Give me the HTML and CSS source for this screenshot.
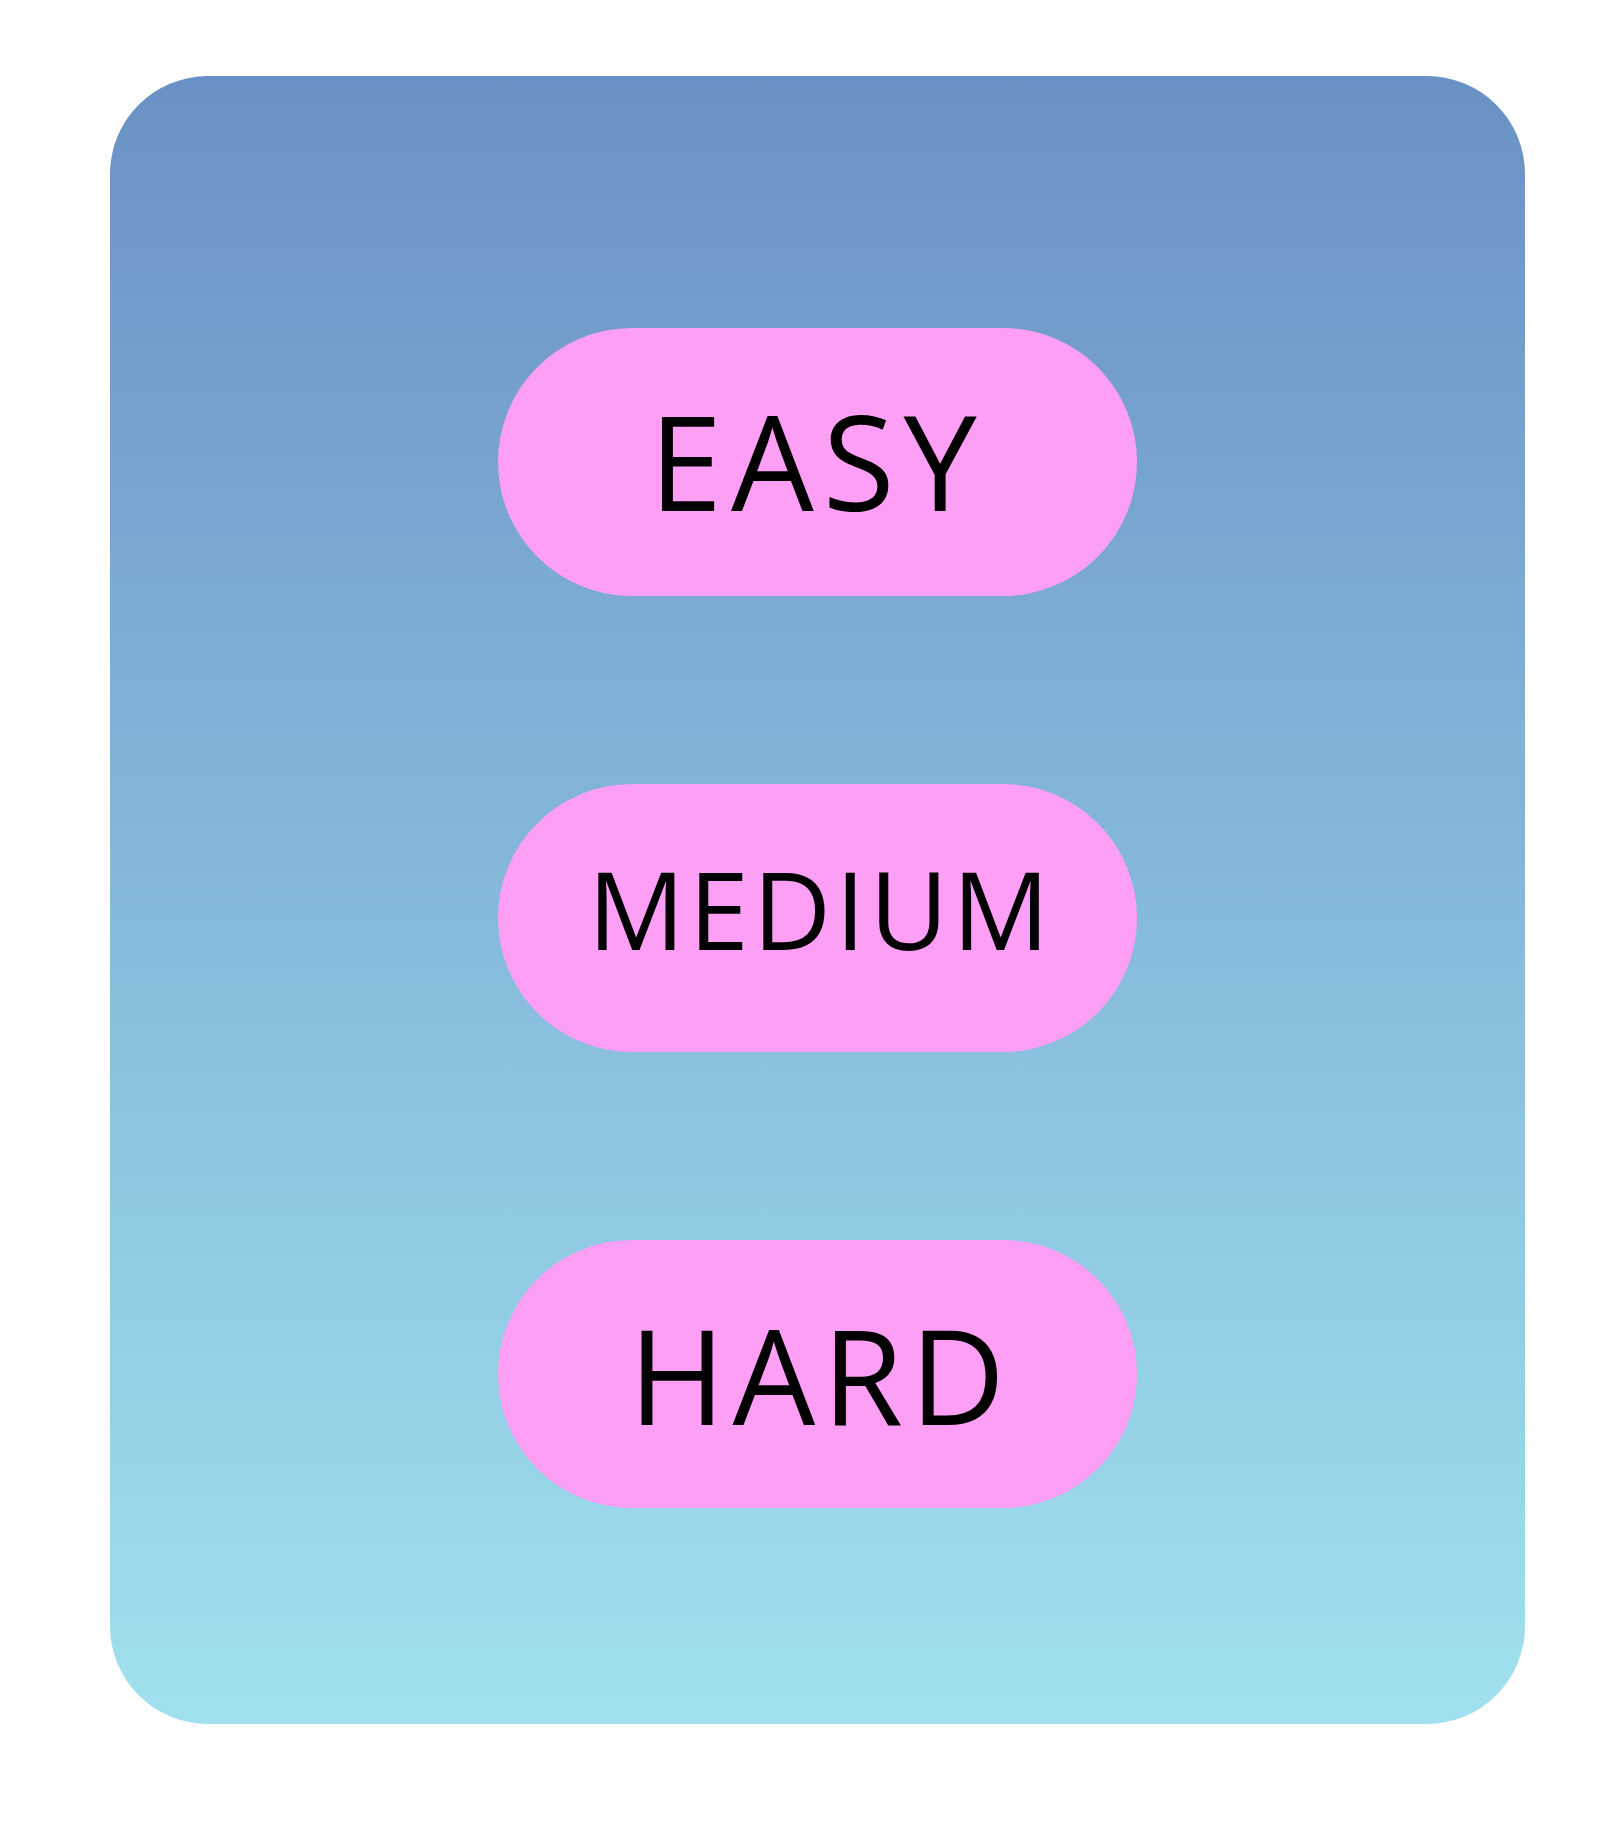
FILE: index.html
```html
<!DOCTYPE html>
<html>
<head>
<meta charset="utf-8">
<link rel="stylesheet" href="styles.css">
</head>
<body>
<div class="card">
  <div class="pill"><span class="label big easy">EASY</span></div>
  <div class="pill"><span class="label mid">MEDIUM</span></div>
  <div class="pill"><span class="label big hard">HARD</span></div>
</div>
</body>
</html>
```
FILE: styles.css
```css
html, body {
  margin: 0;
  padding: 0;
  background: #ffffff;
}
.card {
  margin: 76px 0 0 110px;
  width: 1415px;
  height: 1648px;
  box-sizing: border-box;
  padding-top: 252px;
  border-radius: 98px;
  background: linear-gradient(to bottom, #6a91c5, #a1e1ef);
  display: flex;
  flex-direction: column;
  align-items: center;
  gap: 188px;
}
.pill {
  width: 639px;
  height: 268px;
  border-radius: 134px;
  background: #fd9ff5;
  display: flex;
  align-items: center;
  justify-content: center;
}
.label {
  font-family: "Open Sans", sans-serif;
  color: #000;
  line-height: 1;
}
.big {
  font-size: 131px;
}
.easy {
  letter-spacing: 9px;
  margin-top: -4px;
}
.hard {
  letter-spacing: 7px;
  padding-left: 6px;
}
.mid {
  font-size: 108px;
  letter-spacing: 4px;
  padding-left: 6px;
  margin-top: -18px;
}
```
